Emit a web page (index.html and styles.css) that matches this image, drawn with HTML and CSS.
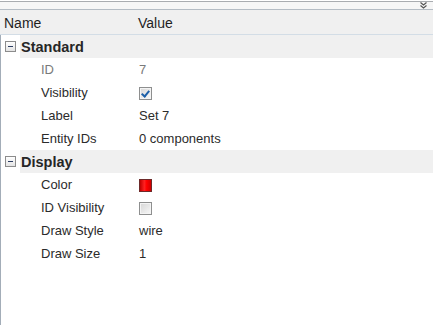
FILE: index.html
```html
<!DOCTYPE html>
<html lang="en">
<head>
    <meta charset="UTF-8">
    <title>Property Grid</title>
    <link rel="stylesheet" href="styles.css">
</head>
<body>
    <div class="panel">
        <div class="toolbar">
            <svg class="chevron" width="7" height="7" viewBox="0 0 7 7">
                <path d="M0.5 0.5 L3.5 3 L6.5 0.5 M0.5 3.5 L3.5 6 L6.5 3.5" fill="none" stroke="#555" stroke-width="1.2"/>
            </svg>
        </div>

        <div class="grid-header">
            <span class="col-name">Name</span>
            <span class="col-value">Value</span>
        </div>

        <div class="grid-body">
            <div class="group">
                <span class="expander"></span>
                <span class="group-title">Standard</span>
            </div>
            <div class="row readonly">
                <span class="name">ID</span>
                <span class="value">7</span>
            </div>
            <div class="row">
                <span class="name">Visibility</span>
                <span class="value"><span class="checkbox checked"></span></span>
            </div>
            <div class="row">
                <span class="name">Label</span>
                <span class="value">Set 7</span>
            </div>
            <div class="row">
                <span class="name">Entity IDs</span>
                <span class="value">0 components</span>
            </div>

            <div class="group">
                <span class="expander"></span>
                <span class="group-title">Display</span>
            </div>
            <div class="row">
                <span class="name">Color</span>
                <span class="value"><span class="swatch"></span></span>
            </div>
            <div class="row">
                <span class="name">ID Visibility</span>
                <span class="value"><span class="checkbox"></span></span>
            </div>
            <div class="row">
                <span class="name">Draw Style</span>
                <span class="value">wire</span>
            </div>
            <div class="row">
                <span class="name">Draw Size</span>
                <span class="value">1</span>
            </div>
        </div>
    </div>
</body>
</html>
```

FILE: styles.css
```css
* {
    margin: 0;
    padding: 0;
    box-sizing: border-box;
}

body {
    font-family: 'Liberation Sans', Arial, sans-serif;
    background: white;
    color: #2b2b2b;
    width: 433px;
    height: 325px;
    overflow: hidden;
}

.panel {
    display: flex;
    flex-direction: column;
    height: 325px;
}

.toolbar {
    position: relative;
    height: 9px;
    margin-top: 1px;
    border-top: 1px solid #a9acb0;
    border-bottom: 1px solid #b4bcc4;
    background: #f6f6f6;
}

.chevron {
    position: absolute;
    right: 6px;
    top: 0;
}

.grid-header {
    display: grid;
    grid-template-columns: 138px 1fr;
    height: 25px;
    align-items: center;
    background: #f0f0f0;
    border-bottom: 1px solid #d3dde6;
    font-size: 14px;
    color: #1f1f1f;
    padding-top: 2px;
}

.col-name {
    padding-left: 4px;
}

.grid-body {
    flex: 1;
    border-left: 1px solid #a3adb8;
}

.group {
    display: flex;
    align-items: center;
    height: 23px;
    background: linear-gradient(to right, white 0, white 19px, #f0f0f0 19px);
}

.expander {
    position: relative;
    width: 11px;
    height: 11px;
    margin-left: 4px;
    margin-right: 5px;
    border: 1px solid #8c8c8c;
    background: linear-gradient(#ffffff, #e4e4e4);
}

.expander::after {
    content: "";
    position: absolute;
    left: 2px;
    top: 4px;
    width: 5px;
    height: 1px;
    background: #2d3e63;
}

.group-title {
    font-size: 14.5px;
    font-weight: bold;
    color: #262626;
}

.row {
    display: grid;
    grid-template-columns: 138px 1fr;
    height: 23px;
    align-items: center;
    font-size: 13px;
}

.row .name {
    padding-left: 40px;
}

.row.readonly {
    color: #7a7a7a;
}

.checkbox {
    display: block;
    position: relative;
    width: 13px;
    height: 13px;
    border: 1px solid #8e8f8f;
    background: linear-gradient(135deg, #d6d6d6, #f8f8f8);
    box-shadow: inset 0 0 0 1px #f4f4f4;
    margin-top: 1px;
}

.checkbox.checked::after {
    content: "";
    position: absolute;
    left: 3px;
    top: 1px;
    width: 3px;
    height: 6px;
    border-right: 2px solid #1c5fa8;
    border-bottom: 2px solid #1c5fa8;
    transform: rotate(40deg);
}

.swatch {
    display: block;
    width: 13px;
    height: 13px;
    border: 1px solid #6d2a2a;
    background: linear-gradient(to right, #c00000, #ff2020 40%, #ff0000 60%, #d00000);
    margin-top: 1px;
}
```
